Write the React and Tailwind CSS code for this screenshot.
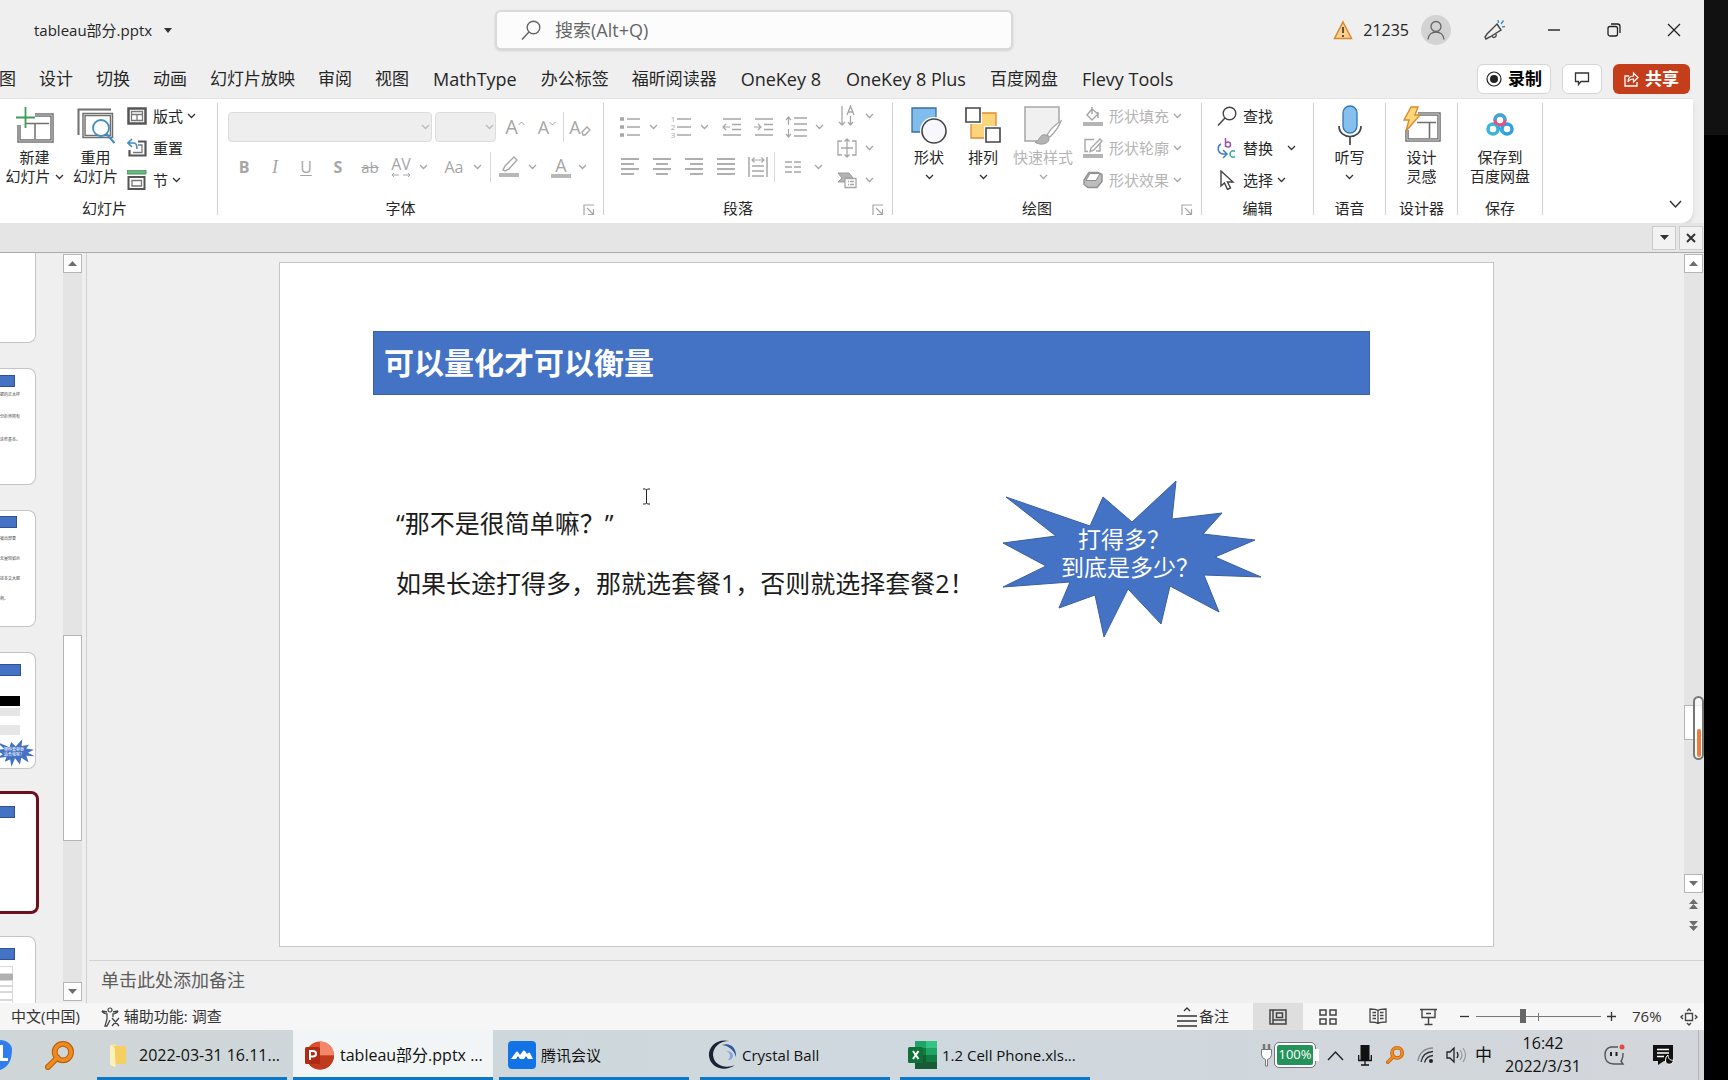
import React, { useState } from 'react';

const GRAY = '#a6a6a6';
const DARK = '#444444';

const Svg = ({ w, h, children, className = '' }) => (
  <svg width={w} height={h} viewBox={`0 0 ${w} ${h}`} fill="none" className={`shrink-0 ${className}`} aria-hidden="true">
    {children}
  </svg>
);

const Chevron = ({ color = '#333333' }) => (
  <Svg w={9} h={6}>
    <path d="M1 1l3.5 3.5L8 1" stroke={color} strokeWidth="1.3" />
  </Svg>
);

const DropChevron = () => (
  <span className="flex w-3.5 justify-center"><Chevron color={GRAY} /></span>
);

const Launcher = () => (
  <button aria-label="更多选项" className="mt-1 w-5">
    <Svg w={12} h={12}>
      <path d="M1 11V1h10M4 4l6 6M10.500 5v5.500H5" stroke={GRAY} strokeWidth="1.200" />
    </Svg>
  </button>
);

const Divider = () => <div className="mt-[3px] h-28 w-px shrink-0 bg-[#d0d0d0]" />;

const Group = ({ label, width, launcher, children }) => (
  <section className={`flex shrink-0 flex-col ${width}`}>
    <div className="flex h-24">{children}</div>
    <div className="flex h-6 items-center text-[15px] leading-6">
      <span className="flex-1 text-center">{label}</span>
      {launcher && <Launcher />}
    </div>
  </section>
);

const BigButton = ({ icon, lines, width, disabled, chevron, inlineChevron }) => (
  <button className={`flex shrink-0 flex-col items-center pt-1 text-[15px] leading-[19px] ${width} ${disabled ? 'text-[#b4b4b4]' : ''}`}>
    <span className="mb-0.5 flex h-[42px] items-center">{icon}</span>
    {lines.map((line, i) => (
      <span key={line} className="flex items-center gap-1 whitespace-nowrap">
        {line}
        {inlineChevron && i === lines.length - 1 && <Chevron />}
      </span>
    ))}
    {chevron && <span className="flex h-[19px] items-center"><Chevron color={disabled ? GRAY : '#333333'} /></span>}
  </button>
);

const SmallButton = ({ icon, label, chevron, disabled, labelClass = '' }) => (
  <button className={`flex h-8 items-center gap-1 text-[15px] ${disabled ? 'text-[#b4b4b4]' : ''}`}>
    <span className="mr-0.5 flex w-5 justify-center">{icon}</span>
    <span className={labelClass}>{label}</span>
    {chevron && <Chevron color={disabled ? GRAY : '#333333'} />}
  </button>
);

const Tool = ({ label, width = 'w-8', children }) => (
  <button aria-label={label} className={`flex h-[30px] shrink-0 items-center justify-center text-[#a6a6a6] ${width}`}>
    {children}
  </button>
);

const Lines = ({ rows }) => (
  <Svg w={20} h={20}>
    {rows.map(([x, w], i) => (
      <path key={i} d={`M${x} ${2 + i * 5}h${w}`} stroke={GRAY} strokeWidth="1.800" />
    ))}
  </Svg>
);

/* ---------- ribbon icons ---------- */

const NewSlideIcon = () => (
  <Svg w={38} h={38}>
    <path d="M19 9h17v26H3V19" stroke="#6f6f6f" strokeWidth="3.500" />
    <path d="M19 9h17v26H3V19" stroke="#c9c9c9" strokeWidth="1" />
    <path d="M10 17.500h23M19 18v15" stroke="#6f6f6f" strokeWidth="1.500" />
    <path d="M9.500 1v21M0 11.500h19" stroke="#3f9c57" strokeWidth="1.800" />
  </Svg>
);

const ReuseIcon = () => (
  <Svg w={38} h={38}>
    <path d="M1.500 29V3.500H34" stroke="#6f6f6f" strokeWidth="2" />
    <path d="M7 8.500h27.500v22H7z" stroke="#6f6f6f" strokeWidth="3.500" />
    <path d="M7 8.500h27.500v22H7z" stroke="#c9c9c9" />
    <circle cx="24" cy="22" r="8" fill="#fff" stroke="#3e8ec4" strokeWidth="1.800" />
    <path d="M29.500 28l8 9" stroke="#3e8ec4" strokeWidth="2" />
  </Svg>
);

const LayoutIcon = () => (
  <Svg w={20} h={18}>
    <path d="M1.500 1.500h17v15h-17z" stroke="#555" strokeWidth="2.500" />
    <path d="M4.500 4.500h11v9h-11zM4.500 7.500h11M10 7.500v6" stroke="#777" strokeWidth="1.300" />
  </Svg>
);

const ResetIcon = () => (
  <Svg w={20} h={20}>
    <path d="M11 3.500h7.500v14h-16V12" stroke="#555" strokeWidth="2.200" />
    <path d="M11 7h4v7.500H6" stroke="#777" strokeWidth="1.300" />
    <path d="M5 1L1 5l4 4M1.500 5H7c2 0 3 2 3 6" stroke="#3e8ec4" strokeWidth="1.600" />
  </Svg>
);

const SectionIcon = () => (
  <Svg w={20} h={20}>
    <path d="M0 0h19v4H0z" fill="#6fb482" stroke="#3f9c57" />
    <path d="M1.500 7h16v12h-16z" stroke="#555" strokeWidth="2" />
    <path d="M5 10.500h9.500V16H5z" stroke="#777" strokeWidth="1.300" />
  </Svg>
);

const ShapesIcon = () => (
  <Svg w={38} h={38}>
    <path d="M2 2h24v24H2z" fill="#80bcec" stroke="#3c6f9c" strokeWidth="1.300" />
    <circle cx="24" cy="25" r="14" fill="#fff" />
    <circle cx="24" cy="25" r="12" fill="#f8f8fc" stroke="#444" strokeWidth="1.600" />
  </Svg>
);

const ArrangeIcon = () => (
  <Svg w={38} h={38}>
    <path d="M7 7h25v25H7z" fill="#fbd47c" stroke="#e08a2c" strokeWidth="1.300" />
    <path d="M0 0h18v18H0zM20 20h18v18H20z" fill="#fff" />
    <path d="M2 2h14v14H2zM22 22h14v14H22z" fill="#fff" stroke="#444" strokeWidth="1.600" />
  </Svg>
);

const QuickStyleIcon = () => (
  <Svg w={40} h={40}>
    <path d="M2 2h34v34H2z" fill="#f0f0f0" stroke={GRAY} strokeWidth="1.500" />
    <path d="M39 14L24 30l-5 4 8 6h12z" fill="#fff" />
    <path d="M38 16c-5 3-11 9-14 14l3 2c5-5 9-10 11-16z" fill="#fff" stroke={GRAY} strokeWidth="1.300" />
    <path d="M12 37c4 0 4-6 8-7 3-1 6 1 6 4 0 5-9 7-14 3z" fill="#b4b4b4" stroke="#999" />
  </Svg>
);

const FillIcon = () => (
  <Svg w={20} h={20}>
    <path d="M9 3L4 9l5 5 6-6zM9 8V1M15 6v6" stroke={GRAY} strokeWidth="1.400" />
    <path d="M0 16h20v4H0z" fill="#b4b4b4" />
  </Svg>
);

const OutlineIcon = () => (
  <Svg w={20} h={20}>
    <path d="M11 1.500H2v12h3M17 5v8h-4" stroke={GRAY} strokeWidth="1.400" />
    <path d="M17 1l2 2-8 9-4 1.500L8 10z" stroke={GRAY} strokeWidth="1.400" />
    <path d="M0 16h20v4H0z" fill="#b4b4b4" />
  </Svg>
);

const EffectIcon = () => (
  <Svg w={20} h={18}>
    <path d="M6 1.500h9l4 2v7l-5 6H5l-4-3V9z" fill="#bdbdbd" stroke="#8f8f8f" strokeWidth="1.400" />
    <path d="M7 2.500h10l-4 7H3z" fill="#fff" stroke="#8f8f8f" />
  </Svg>
);

const SearchGlyph = ({ size = 20, color = DARK }) => (
  <svg width={size} height={size} viewBox="0 0 20 20" fill="none" className="shrink-0" aria-hidden="true">
    <circle cx="12.500" cy="7.500" r="6.300" stroke={color} strokeWidth="1.400" />
    <path d="M8 12l-7 7.500" stroke={color} strokeWidth="1.500" />
  </svg>
);

const ReplaceIcon = () => (
  <Svg w={20} h={22}>
    <path d="M8.500 1v9M8.500 6.500c1-2.500 5-2 5 1s-4 3.500-5 1" stroke="#9d4fb5" strokeWidth="1.500" />
    <path d="M18 14.500c-2-1.500-5-.5-5 2.500s3 4 5 2.500" stroke="#2e9fae" strokeWidth="1.500" />
    <path d="M4 7c-4 2-4 9 2 10h3M6 13l4 4-4 4" stroke="#3e7fc4" strokeWidth="1.500" />
  </Svg>
);

const SelectIcon = () => (
  <Svg w={18} h={20}>
    <path d="M3 1l12 11H9.500l3 6-3 1.500-3-6.500L3 16z" fill="#fff" stroke={DARK} strokeWidth="1.400" />
  </Svg>
);

const DictateIcon = () => (
  <Svg w={24} h={40}>
    <rect x="5" y="1" width="14" height="27" rx="7" fill="#86c0ee" stroke="#2f78b4" strokeWidth="1.300" />
    <path d="M1 21c0 14 22 14 22 0M12 32v8" stroke={DARK} strokeWidth="1.700" />
  </Svg>
);

const DesignerIcon = () => (
  <Svg w={38} h={38}>
    <path d="M15 8h21v26H4V24" stroke="#6f6f6f" strokeWidth="3.500" />
    <path d="M15 8h21v26H4V24" stroke="#d8d8d8" />
    <path d="M14 16.500h19M26.500 17v15" stroke="#6f6f6f" strokeWidth="1.600" />
    <path d="M8 1h7l-3 8h5L3 25l3-11H1z" fill="#fcd67a" stroke="#d98a2b" strokeWidth="1.400" />
  </Svg>
);

const NetdiskIcon = () => (
  <Svg w={28} h={24}>
    <circle cx="7" cy="16" r="5" stroke="#38b5dc" strokeWidth="3.500" />
    <circle cx="21" cy="16" r="5" stroke="#2f9fe0" strokeWidth="3.500" />
    <circle cx="14" cy="7" r="5" stroke="#e0557c" strokeWidth="3.500" />
    <path d="M9 7a5 5 0 0 1 10 0" stroke="#38a9dc" strokeWidth="3.500" />
    <path d="M10.500 12.500L18 20" stroke="#35aade" strokeWidth="3" />
  </Svg>
);

/* ---------- title bar and tabs ---------- */

const TitleBar = () => (
  <header className="flex h-[60px] items-center">
    <button className="ml-[34px] flex w-[461px] items-center gap-3 text-[15px] text-[#262626]">
      tableau部分.pptx
      <Svg w={8} h={5}><path d="M0 0h8L4 5z" fill="#333" /></Svg>
    </button>
    <label className="flex h-10 w-[518px] items-center gap-3.5 rounded-md border-2 border-[#d9d9d9] bg-[#fcfcfc] pl-6 shadow-sm">
      <SearchGlyph color="#666666" />
      <input
        type="search"
        aria-label="搜索"
        placeholder="搜索(Alt+Q)"
        className="flex-1 bg-transparent text-[18px] outline-none placeholder:text-[#666666]"
      />
    </label>
    <div className="ml-auto flex items-center">
      <Svg w={20} h={20}>
        <path d="M10 2l8.500 16.500h-17z" fill="#fbd08a" stroke="#d8892f" strokeWidth="1.500" />
        <path d="M10 7v6M10 15v2" stroke="#333" strokeWidth="1.600" />
      </Svg>
      <span className="ml-2.5 text-base text-[#262626]">21235</span>
      <button aria-label="账户" className="ml-3 flex h-[30px] w-[30px] items-center justify-center rounded-full bg-[#d3d3d3]">
        <Svg w={20} h={20}>
          <circle cx="10" cy="6.500" r="5" stroke="#666" strokeWidth="1.300" />
          <path d="M2 19.500c0-10 16-10 16 0" stroke="#666" strokeWidth="1.300" />
        </Svg>
      </button>
      <button aria-label="新增功能" className="ml-[33px]">
        <Svg w={22} h={22}>
          <path d="M13 5l4 6L6 18l-4 2-1-2 2-3z" stroke={DARK} strokeWidth="1.400" />
          <path d="M8 17c1 3 5 1 4-2" stroke={DARK} strokeWidth="1.300" />
          <path d="M14.500 4L14 1M17 5l2.500-3.500M18 8l3-.5" stroke="#3e8ec4" strokeWidth="1.400" />
        </Svg>
      </button>
      <button aria-label="最小化" className="ml-[42px]">
        <Svg w={12} h={12}><path d="M0 6h12" stroke="#222" strokeWidth="1.400" /></Svg>
      </button>
      <button aria-label="还原" className="ml-[47px]">
        <Svg w={14} h={14}>
          <rect x="1" y="3.500" width="9.500" height="9.500" rx="2" stroke="#222" strokeWidth="1.300" />
          <path d="M4 1h6.500Q13 1 13 3.500V10" stroke="#222" strokeWidth="1.300" />
        </Svg>
      </button>
      <button aria-label="关闭" className="ml-[46px] mr-[23px]">
        <Svg w={14} h={14}><path d="M1 1l12 12M13 1L1 13" stroke="#222" strokeWidth="1.300" /></Svg>
      </button>
    </div>
  </header>
);

const tabs = ['绘图', '设计', '切换', '动画', '幻灯片放映', '审阅', '视图', 'MathType', '办公标签', '福昕阅读器', 'OneKey 8', 'OneKey 8 Plus', '百度网盘', 'Flevy Tools'];

const isLatin = (text) => /^[A-Z]/.test(text);

const TabRow = () => (
  <nav className="flex h-[38px] items-center overflow-hidden">
    <div className="-ml-[18px] flex gap-[23px] text-[17px] text-[#262626]">
      {tabs.map((tab) => (
        <button key={tab} className={isLatin(tab) ? 'whitespace-nowrap px-px text-[18px]' : 'whitespace-nowrap'}>{tab}</button>
      ))}
    </div>
    <div className="ml-auto mr-3.5 flex items-center gap-[11px] text-[17px] font-bold">
      <button className="flex h-[30px] items-center gap-1.5 rounded-md border border-[#d6d6d6] bg-white px-2">
        <Svg w={16} h={16}>
          <circle cx="8" cy="8" r="7" stroke="#222" strokeWidth="1.200" />
          <circle cx="8" cy="8" r="4" fill="#222" />
        </Svg>
        录制
      </button>
      <button aria-label="批注" className="flex h-[30px] w-10 items-center justify-center rounded-md border border-[#d6d6d6] bg-white">
        <Svg w={16} h={14}><path d="M1.500 1h13v8.500H7L4.500 12.500v-3h-3z" stroke="#333" strokeWidth="1.300" /></Svg>
      </button>
      <button className="flex h-[30px] items-center gap-1.5 rounded-md bg-[#c43e1c] px-[11px] text-white">
        <Svg w={15} h={16}>
          <path d="M5 5H1v10h12v-4" stroke="#fff" strokeWidth="1.300" />
          <path d="M4 11c0-4 2-6 5.500-6V2L14 6.500 9.500 11V8C7 8 5 9 4 11z" stroke="#fff" strokeWidth="1.200" />
        </Svg>
        共享
      </button>
    </div>
  </nav>
);

/* ---------- ribbon ---------- */

const Combo = ({ label, width }) => (
  <span className={`relative flex h-[30px] ${width}`}>
    <select aria-label={label} disabled className="w-full appearance-none rounded border border-[#dcdcdc] bg-[#eeeeee]" />
    <span className="pointer-events-none absolute right-0.5 top-3"><Chevron color="#bbbbbb" /></span>
  </span>
);

const Bar = () => <span className="h-[30px] w-px shrink-0 bg-[#d8d8d8]" />;

const FontGroup = () => (
  <Group label="字体" width="w-[385px]" launcher>
    <div className="flex flex-col gap-2.5 pl-2.5 pt-3">
      <div className="flex items-center">
        <Combo label="字体" width="w-[204px] mr-[3px]" />
        <Combo label="字号" width="w-[61px] mr-[3px]" />
        <Tool label="增大字号">
          <span className="text-xl">A</span>
          <Svg w={7} h={12}><path d="M.5 4L3.500 1l3 3" stroke={GRAY} /></Svg>
        </Tool>
        <Tool label="减小字号">
          <span className="text-lg">A</span>
          <Svg w={7} h={12}><path d="M.5 1l3 3 3-3" stroke={GRAY} /></Svg>
        </Tool>
        <Bar />
        <Tool label="清除格式" width="w-8">
          <span className="text-lg">A</span>
          <Svg w={10} h={10} className="mt-2"><path d="M1 6l5-5 3 3-5 5H2z" stroke={GRAY} strokeWidth="1.300" /></Svg>
        </Tool>
      </div>
      <div className="flex items-center">
        <Tool label="加粗"><span className="text-base font-bold">B</span></Tool>
        <Tool label="倾斜" width="w-[30px]"><span className="font-['Liberation_Serif'] text-lg italic">I</span></Tool>
        <Tool label="下划线"><span className="text-base underline underline-offset-2">U</span></Tool>
        <Tool label="阴影"><span className="text-base font-bold">S</span></Tool>
        <Tool label="删除线"><span className="text-[15px] line-through">ab</span></Tool>
        <Tool label="字符间距" width="w-[30px]">
          <span className="flex flex-col items-center leading-4">
            <span className="text-base leading-4">AV</span>
            <Svg w={20} h={6}><path d="M3 1L1 3l2 2M1 3h7M17 1l2 2-2 2M19 3h-7" stroke={GRAY} /></Svg>
          </span>
        </Tool>
        <DropChevron />
        <Tool label="更改大小写" width="w-8 ml-2"><span className="text-base">Aa</span></Tool>
        <DropChevron />
        <span className="ml-1.5 mr-1 flex"><Bar /></span>
        <Tool label="突出显示" width="w-7">
          <Svg w={20} h={22}>
            <path d="M15 1l3 3-8 9-4 2-2-1 2-4z" stroke={GRAY} strokeWidth="1.400" />
            <path d="M0 17h20v4H0z" fill="#b8b8b8" />
          </Svg>
        </Tool>
        <span className="ml-0.5 flex"><DropChevron /></span>
        <Tool label="字体颜色" width="ml-2 w-7">
          <span className="flex flex-col items-center">
            <span className="text-lg leading-[18px]">A</span>
            <span className="h-1 w-5 bg-[#b8b8b8]" />
          </span>
        </Tool>
        <DropChevron />
      </div>
    </div>
  </Group>
);

const BulletIcon = () => (
  <Svg w={20} h={22}>
    <path d="M0 3h4M0 11h4M0 19h4" stroke={GRAY} strokeWidth="3.500" />
    <path d="M7 3h13M7 11h13M7 19h13" stroke={GRAY} strokeWidth="1.600" />
  </Svg>
);

const NumberIcon = () => (
  <span className="flex items-center gap-0.5">
    <span className="flex flex-col text-[8px] leading-[8px]"><span>1</span><span>2</span><span>3</span></span>
    <Svg w={14} h={22}><path d="M0 3h14M0 11h14M0 19h14" stroke={GRAY} strokeWidth="1.600" /></Svg>
  </span>
);

const IndentIcon = ({ arrow }) => (
  <Svg w={20} h={20}>
    <path d="M1 2h18M10 7.500h9M10 12.500h9M1 18h18" stroke={GRAY} strokeWidth="1.600" />
    <path d={arrow} stroke={GRAY} strokeWidth="1.200" />
  </Svg>
);

const ParagraphGroup = () => (
  <Group label="段落" width="w-[288px]" launcher>
    <div className="flex flex-col gap-2.5 pl-2.5 pt-3">
      <div className="flex items-center">
        <Tool label="项目符号"><BulletIcon /></Tool>
        <DropChevron />
        <Tool label="编号" width="ml-[5px] w-8"><NumberIcon /></Tool>
        <DropChevron />
        <Tool label="减少缩进" width="ml-[5px] w-8"><IndentIcon arrow="M8 10H1M4 7l-3 3 3 3" /></Tool>
        <Tool label="增加缩进"><IndentIcon arrow="M0 10h7M4 7l3 3-3 3" /></Tool>
        <Tool label="行距">
          <Svg w={22} h={22}>
            <path d="M9 2h13M9 8h13M9 14h13M9 20h13" stroke={GRAY} strokeWidth="1.600" />
            <path d="M3.500 9V1M1 4l2.500-3L6 4M3.500 13v8M1 18l2.500 3L6 18" stroke={GRAY} strokeWidth="1.200" />
          </Svg>
        </Tool>
        <DropChevron />
      </div>
      <div className="flex items-center">
        <Tool label="左对齐"><Lines rows={[[1, 18], [1, 13], [1, 18], [1, 13]]} /></Tool>
        <Tool label="居中"><Lines rows={[[1, 18], [4, 12], [1, 18], [4, 12]]} /></Tool>
        <Tool label="右对齐"><Lines rows={[[1, 18], [6, 13], [1, 18], [6, 13]]} /></Tool>
        <Tool label="两端对齐"><Lines rows={[[1, 18], [1, 18], [1, 18], [1, 18]]} /></Tool>
        <Tool label="分散对齐">
          <Svg w={20} h={22}>
            <path d="M1 1v20M19 1v20M4 10h12M4 15h12M4 20h12" stroke={GRAY} strokeWidth="1.500" />
            <path d="M4 4h12M6.500 1.500L4 4l2.500 2.500M13.500 1.500L16 4l-2.500 2.500" stroke={GRAY} strokeWidth="1.200" />
          </Svg>
        </Tool>
        <Bar />
        <Tool label="分栏" width="w-9">
          <Svg w={16} h={12}><path d="M0 1h7M0 6h7M0 11h7M9 1h7M9 6h7M9 11h7" stroke={GRAY} strokeWidth="1.500" /></Svg>
        </Tool>
        <DropChevron />
      </div>
    </div>
    <div className="ml-auto mr-[18px] flex flex-col">
      <button aria-label="文字方向" className="flex h-8 items-center gap-2">
        <Svg w={20} h={22}>
          <path d="M5 1v19M2 17l3 3 3-3M10 10l3.500-9L17 10M11 7h5M13.500 11v9M11 17l2.500 3 2.500-3" stroke={GRAY} strokeWidth="1.300" />
        </Svg>
        <Chevron color={GRAY} />
      </button>
      <button aria-label="对齐文本" className="flex h-8 items-center gap-2">
        <Svg w={20} h={20}>
          <path d="M5 3H1v14h4M15 3h4v14h-4M4 10h12M10 1v18M7.500 3.500L10 1l2.500 2.500M7.500 16.500L10 19l2.500-2.500" stroke={GRAY} strokeWidth="1.300" />
        </Svg>
        <Chevron color={GRAY} />
      </button>
      <button aria-label="转换为 SmartArt" className="flex h-8 items-center gap-2">
        <Svg w={20} h={18}>
          <path d="M1 2h11l4 5H8v4H1l4-4z" fill="#b4b4b4" stroke="#999" />
          <path d="M8 7.500h11v9H8zM11 10.500h1M13 10.500h4M11 13.500h1M13 13.500h4" fill="#fff" stroke={GRAY} strokeWidth="1.300" />
        </Svg>
        <Chevron color={GRAY} />
      </button>
    </div>
  </Group>
);

const Ribbon = () => (
  <div className="mr-[11px] flex rounded-br-xl border-t border-[#e2e2e2] bg-white pb-[3px] pt-px text-[#262626] shadow-md">
    <Group label="幻灯片" width="w-[217px] pr-2">
      <BigButton icon={<NewSlideIcon />} lines={['新建', '幻灯片']} width="w-[69px]" inlineChevron />
      <BigButton icon={<ReuseIcon />} lines={['重用', '幻灯片']} width="w-[53px]" />
      <div className="ml-[5px] flex flex-col">
        <SmallButton icon={<LayoutIcon />} label="版式" chevron />
        <SmallButton icon={<ResetIcon />} label="重置" />
        <SmallButton icon={<SectionIcon />} label="节" chevron />
      </div>
    </Group>
    <Divider />
    <FontGroup />
    <Divider />
    <ParagraphGroup />
    <Divider />
    <Group label="绘图" width="w-[308px]" launcher>
      <BigButton icon={<ShapesIcon />} lines={['形状']} width="ml-[9px] w-[54px]" chevron />
      <BigButton icon={<ArrangeIcon />} lines={['排列']} width="w-[54px]" chevron />
      <BigButton icon={<QuickStyleIcon />} lines={['快速样式']} width="w-[66px]" disabled chevron />
      <div className="ml-[7px] flex flex-col">
        <SmallButton icon={<FillIcon />} label="形状填充" disabled chevron />
        <SmallButton icon={<OutlineIcon />} label="形状轮廓" disabled chevron />
        <SmallButton icon={<EffectIcon />} label="形状效果" disabled chevron />
      </div>
    </Group>
    <Divider />
    <Group label="编辑" width="w-[111px]">
      <div className="ml-[15px] flex flex-col">
        <SmallButton icon={<SearchGlyph />} label="查找" />
        <SmallButton icon={<ReplaceIcon />} label="替换" labelClass="mr-2.5" chevron />
        <SmallButton icon={<SelectIcon />} label="选择" chevron />
      </div>
    </Group>
    <Divider />
    <Group label="语音" width="w-[71px]">
      <BigButton icon={<DictateIcon />} lines={['听写']} width="w-full" chevron />
    </Group>
    <Divider />
    <Group label="设计器" width="w-[71px]">
      <BigButton icon={<DesignerIcon />} lines={['设计', '灵感']} width="w-full" />
    </Group>
    <Divider />
    <Group label="保存" width="w-[84px]">
      <BigButton icon={<NetdiskIcon />} lines={['保存到', '百度网盘']} width="w-full" />
    </Group>
    <Divider />
    <button aria-label="折叠功能区" className="mb-[11px] ml-auto mr-[11px] self-end">
      <Svg w={13} h={9}><path d="M1 1l5.500 6L12 1" stroke="#333" strokeWidth="1.500" /></Svg>
    </button>
  </div>
);

/* ---------- thumbnails ---------- */

const Thumb = ({ selected, height = 'h-[117px]', children }) => (
  <button
    aria-label="幻灯片缩略图"
    className={
      selected
        ? '-my-[3px] block h-[123px] w-[39px] shrink-0 overflow-hidden rounded-r-lg border-[3px] border-l-0 border-[#6d0f1c] bg-white text-left'
        : `block w-9 shrink-0 overflow-hidden rounded-r-lg border border-l-0 border-[#c4c4c4] bg-white text-left ${height}`
    }
  >
    <span className="flex h-full flex-col items-start">{children}</span>
  </button>
);

const ThumbBar = ({ className }) => <span className={`shrink-0 border border-l-0 border-[#2f528f] bg-[#4472c4] ${className}`} />;

const TinyText = ({ children, className }) => (
  <span className={`shrink-0 whitespace-nowrap text-[4px] leading-[6px] text-[#444] ${className}`}>{children}</span>
);

const ScrollButton = ({ up, label }) => (
  <button aria-label={label} className="flex h-[19px] w-[19px] shrink-0 items-center justify-center border border-[#b5b5b5] bg-white">
    <Svg w={9} h={5}><path d={up ? 'M0 5h9L4.500 0z' : 'M0 0h9L4.500 5z'} fill="#6e6e6e" /></Svg>
  </button>
);

const BURST = '4,17 88,46 101,17 130,42 174,1 170,39 220,33 201,54 253,60 213,77 259,97 202,95 217,132 168,106 159,144 126,109 102,157 93,115 57,128 68,102 1,107 44,86 1,63 54,56';

const ThumbPanel = () => (
  <aside className="flex w-[87px] shrink-0 justify-between border-r border-[#cfcfcf]">
    <div className="flex min-h-0 flex-col gap-[25px] overflow-hidden">
      <Thumb height="h-[90px] rounded-tr-none border-t-0" />
      <Thumb>
        <ThumbBar className="mt-1.5 h-3 w-[15px]" />
        <TinyText className="mt-[5px]">据的正太样</TinyText>
        <TinyText className="mt-4">分析师所有</TinyText>
        <TinyText className="mt-[17px]">这些基本。</TinyText>
      </Thumb>
      <Thumb>
        <ThumbBar className="mt-[5px] h-3 w-[17px]" />
        <TinyText className="mt-2">被出部果</TinyText>
        <TinyText className="mt-3.5">无量较如示</TinyText>
        <TinyText className="mt-3.5">技本文大服</TinyText>
        <TinyText className="mt-3.5">商。</TinyText>
      </Thumb>
      <Thumb>
        <ThumbBar className="mt-[11px] h-3 w-[21px]" />
        <span className="mt-5 h-2.5 w-5 shrink-0 bg-black" />
        <span className="mt-0.5 h-2 w-5 shrink-0 bg-[#e6e6e6]" />
        <span className="mt-[9px] h-2.5 w-5 shrink-0 bg-[#e6e6e6]" />
        <span className="relative mt-1 h-7 w-[35px] shrink-0">
          <svg viewBox="25 0 235 158" preserveAspectRatio="none" className="h-full w-full" aria-hidden="true">
            <polygon points={BURST} fill="#4472c4" />
          </svg>
          <span className="absolute left-1 top-2 whitespace-nowrap text-[4px] leading-[5px] text-white">哪种套餐更<br />适合我呢？</span>
        </span>
      </Thumb>
      <Thumb selected>
        <ThumbBar className="mt-3 h-3 w-[15px]" />
      </Thumb>
      <Thumb>
        <ThumbBar className="mt-[11px] h-3 w-[15px]" />
        <span className="mt-1.5 h-2 w-[13px] shrink-0 border border-l-0 border-[#d8d8d8]" />
        <span className="h-1.5 w-[13px] shrink-0 bg-[#b0b0b0]" />
        <span className="h-1.5 w-[13px] shrink-0 border border-l-0 border-[#d8d8d8]" />
        <span className="h-1.5 w-[13px] shrink-0 border border-l-0 border-[#d8d8d8]" />
        <span className="h-2 w-[13px] shrink-0 border border-l-0 border-[#d8d8d8]" />
        <span className="h-4 w-[13px] shrink-0 border border-l-0 border-[#d8d8d8]" />
      </Thumb>
    </div>
    <div className="mb-0.5 mr-1 mt-px flex flex-col bg-[#e4e4e4]">
      <ScrollButton up label="向上滚动" />
      <div className="flex-[363]" />
      <div className="flex-[205] border border-[#b5b5b5] bg-white" />
      <div className="flex-[141]" />
      <ScrollButton label="向下滚动" />
    </div>
  </aside>
);

/* ---------- slide ---------- */

const Slide = () => (
  <article className="relative h-full border border-[#c6c6c6] bg-white">
    <h1 className="ml-[93px] mr-[123px] mt-[68px] h-16 border border-[#3a62a8] bg-[#4472c4] pl-2.5 text-[30px] font-bold leading-[62px] text-white">
      可以量化才可以衡量
    </h1>
    <div className="mt-[85px] flex">
      <div className="ml-[116px] w-[606px] shrink-0 pt-[13px] text-[25px] leading-[60px] text-[#1c1c1c]">
        <p>“那不是很简单嘛？”</p>
        <p>如果长途打得多，那就选套餐1，否则就选择套餐2！</p>
      </div>
      <div className="relative h-[158px] w-[260px] shrink-0">
        <Svg w={260} h={158}>
          <polygon points={BURST} fill="#4472c4" stroke="#3a5f9f" strokeWidth="1" />
        </Svg>
        <div className="absolute inset-x-0 top-[45px] text-center text-[23px] leading-7 text-white">
          <p className="pr-4">打得多？</p>
          <p className="pr-1">到底是多少？</p>
        </div>
      </div>
    </div>
    <span className="absolute left-[362px] top-[225px]">
      <Svg w={9} h={17}><path d="M1 1h2.500l1 1 1-1H8M4.500 2v13M1 16h2.500l1-1 1 1H8" stroke="#222" /></Svg>
    </span>
  </article>
);

const Editor = () => (
  <main className="flex min-w-0 flex-1 flex-col">
    <div className="flex min-h-0 flex-1">
      <div className="min-w-0 flex-1 pb-[13px] pl-48 pr-[190px] pt-[9px]">
        <Slide />
      </div>
      <div className="relative mt-px flex w-5 shrink-0 flex-col items-start pb-[29px]">
        <div className="flex min-h-0 w-full flex-1 flex-col bg-[#e4e4e4]">
          <ScrollButton up label="向上滚动" />
          <div className="flex-[433]" />
          <div className="flex-[33] border border-[#b5b5b5] bg-white" />
          <div className="flex-[134]" />
          <ScrollButton label="向下滚动" />
        </div>
        <button aria-label="上一张幻灯片" className="ml-[5px] mt-1.5 flex">
          <Svg w={9} h={10}><path d="M0 5h9L4.500 0zM0 10h9L4.500 5z" fill="#6e6e6e" /></Svg>
        </button>
        <button aria-label="下一张幻灯片" className="ml-[5px] mt-3 flex">
          <Svg w={9} h={10}><path d="M0 0h9L4.500 5zM0 5h9L4.500 10z" fill="#6e6e6e" /></Svg>
        </button>
        <div className="absolute right-0 top-[442px] flex h-16 w-[11px] items-end justify-center rounded-full border-2 border-[#777] bg-white/70 p-px">
          <div className="h-7 w-1 rounded-full bg-[#ed7d3c]" />
        </div>
      </div>
    </div>
    <div className="ml-0.5 h-[43px] border-t border-[#d2d2d2] pl-3 text-[18px] leading-[38px]">
      <input aria-label="备注" placeholder="单击此处添加备注" className="w-full bg-transparent outline-none placeholder:text-[#5c5c5c]" />
    </div>
  </main>
);

const StatusBar = () => {
  const [zoom, setZoom] = useState(76);
  return (
    <div className="flex h-[27px] items-center bg-[#f6f6f6] text-[15px] text-[#333]">
      <button className="ml-[11px]">中文(中国)</button>
      <button className="ml-[21px] flex items-center gap-1">
        <Svg w={19} h={20}>
          <circle cx="9" cy="3" r="2" stroke={DARK} strokeWidth="1.200" />
          <path d="M1 4c0 2 4 3 5 3v5l-2 7h2l3-6M17 4c0 2-4 3-5 3v3M1 4l5 1M17 4l-5 1M11 11l7 8M18 11l-7 8" stroke={DARK} strokeWidth="1.300" />
        </Svg>
        辅助功能: 调查
      </button>
      <button className="ml-auto flex items-center gap-0.5">
        <Svg w={20} h={22}><path d="M7 5l3-3 3 3M0 10h20M0 15h20M0 20h20" stroke="#333" strokeWidth="1.300" /></Svg>
        备注
      </button>
      <button aria-label="普通视图" className="ml-6 flex h-full w-[50px] items-center justify-center bg-[#dedede]">
        <Svg w={18} h={16}><path d="M1 1h16v14H1zM4 1v14M4 11h13M7.500 4h6v4.500h-6z" stroke={DARK} strokeWidth="1.500" /></Svg>
      </button>
      <button aria-label="幻灯片浏览" className="flex w-[50px] justify-center">
        <Svg w={18} h={16}><path d="M1 1h6v5H1zM11 1h6v5h-6zM1 10h6v5H1zM11 10h6v5h-6z" stroke={DARK} strokeWidth="1.500" /></Svg>
      </button>
      <button aria-label="阅读视图" className="flex w-[50px] justify-center">
        <Svg w={18} h={17}><path d="M9 2.500C7 1 4 1 1 1v13c3 0 6 0 8 1.500M9 2.500C11 1 14 1 17 1v13c-3 0-6 0-8 1.500M9 2v14M3.500 4.500H7M3.500 7.500H7M3.500 10.500H7M11 4.500h3.500M11 7.500h3.500M11 10.500h3.500" stroke={DARK} strokeWidth="1.300" /></Svg>
      </button>
      <button aria-label="幻灯片放映" className="flex w-[50px] justify-center">
        <Svg w={17} h={18}><path d="M0 1.500h17M2 2v7.500h13V2M8.500 10v6M4.500 16.500h8M6 5.500h5" stroke={DARK} strokeWidth="1.400" /></Svg>
      </button>
      <button aria-label="缩小" className="ml-[7px]">
        <Svg w={9} h={9}><path d="M0 4.500h9" stroke="#333" strokeWidth="1.300" /></Svg>
      </button>
      <span className="relative ml-[7px] flex w-[125px] items-center">
        <input
          type="range"
          aria-label="缩放"
          min="10"
          max="190"
          value={zoom}
          onChange={(e) => setZoom(Number(e.target.value))}
          className="h-3.5 w-full appearance-none bg-transparent [&::-webkit-slider-runnable-track]:h-px [&::-webkit-slider-runnable-track]:bg-[#777] [&::-webkit-slider-thumb]:-mt-[7px] [&::-webkit-slider-thumb]:h-3.5 [&::-webkit-slider-thumb]:w-1.5 [&::-webkit-slider-thumb]:appearance-none [&::-webkit-slider-thumb]:bg-[#666]"
        />
        <span className="absolute left-[62px] h-2 w-px bg-[#777]" />
      </span>
      <button aria-label="放大" className="ml-1.5">
        <Svg w={9} h={9}><path d="M0 4.500h9M4.500 0v9" stroke="#333" strokeWidth="1.300" /></Svg>
      </button>
      <span className="ml-4 w-8">{zoom}%</span>
      <button aria-label="适应窗口" className="ml-4 mr-1.5">
        <Svg w={18} h={18}><path d="M5.500 5.500h7v7h-7zM7 3l2-2 2 2M7 15l2 2 2-2M3 7L1 9l2 2M15 7l2 2-2 2" stroke={DARK} strokeWidth="1.400" /></Svg>
      </button>
    </div>
  );
};

/* ---------- taskbar ---------- */

const FolderIcon = () => (
  <Svg w={18} h={25}>
    <path d="M1 2l6-1v23l-6-2z" fill="#fbe59a" />
    <path d="M5 3h12v18H7z" fill="#f6cf62" />
    <path d="M1 2l5 3v19l-5-2z" fill="#fdf0bd" />
  </Svg>
);

const PowerPointIcon = () => (
  <Svg w={29} h={29}>
    <circle cx="15" cy="14.500" r="14" fill="#d9502f" />
    <path d="M15 .5a14 14 0 0 1 14 14H15z" fill="#f3876a" />
    <path d="M1 14.500h28a14 14 0 0 1-28 0z" fill="#c23a1e" />
    <rect x="0" y="6" width="15" height="17" rx="1.500" fill="#b02b14" />
    <path d="M5 19v-9h3c4 0 4 5.500 0 5.500H5" stroke="#fff" strokeWidth="2" />
  </Svg>
);

const MeetingIcon = () => (
  <Svg w={28} h={28}>
    <rect width="28" height="28" rx="4" fill="#1273e6" />
    <path d="M3 18l5-7q1-1 2 0l2 3 3-4q1-1 2 0l2 3 1-1q1-1 2 0l3 6h-5l-2-3-2 3h-4l-2-3-2 3z" fill="#fff" />
  </Svg>
);

const CrystalIcon = () => (
  <Svg w={30} h={30}>
    <path d="M21 1C9-2 0 7 1 16c1 11 15 17 26 9-9 4-21 1-22-10C5 7 12 1 21 1z" fill="#1c2233" />
    <path d="M14 5c8-3 15 3 14 12-2-7-7-11-14-12z" fill="#2f5a9c" />
    <path d="M17 11c5 0 7 6 3 9 7 0 7-10-3-9z" fill="#7fa6d6" />
  </Svg>
);

const ExcelIcon = () => (
  <Svg w={29} h={28}>
    <path d="M7 0h11v7H7z" fill="#21a366" />
    <path d="M18 0h11v7H18z" fill="#33c481" />
    <path d="M7 7h11v7H7z" fill="#107c41" />
    <path d="M18 7h11v7H18z" fill="#21a366" />
    <path d="M7 14h22v14H7z" fill="#185c37" />
    <path d="M18 14h11v7H18z" fill="#107c41" />
    <rect x="0" y="6" width="15" height="16" rx="1.500" fill="#0f7039" />
    <path d="M5 10l5.500 8M10.500 10L5 18" stroke="#fff" strokeWidth="2" />
  </Svg>
);

const Magnifier = ({ size }) => (
  <svg width={size} height={size} viewBox="0 0 30 30" fill="none" className="shrink-0" aria-hidden="true">
    <circle cx="18.500" cy="11.500" r="8.500" stroke="#b8590f" strokeWidth="6" />
    <path d="M13 17L3 27" stroke="#b8590f" strokeWidth="6" strokeLinecap="round" />
    <circle cx="18.500" cy="11.500" r="8.500" stroke="#ef8a1d" strokeWidth="4" />
    <path d="M13 17L3 27" stroke="#ef8a1d" strokeWidth="4" strokeLinecap="round" />
  </svg>
);

const tasks = [
  { icon: <FolderIcon />, text: '2022-03-31 16.11...', cls: 'w-[190px] mr-1.5 pl-3 gap-3 text-base' },
  { icon: <PowerPointIcon />, text: 'tableau部分.pptx ...', cls: 'w-[200px] mr-1.5 pl-3 gap-1.5 bg-[#f1f5f6] text-base' },
  { icon: <MeetingIcon />, text: '腾讯会议', cls: 'w-[190px] mr-[11px] pl-[9px] gap-[5px] text-[15px]' },
  { icon: <CrystalIcon />, text: 'Crystal Ball', cls: 'w-[190px] mr-2.5 pl-2 gap-1 text-[15px]' },
  { icon: <ExcelIcon />, text: '1.2 Cell Phone.xls...', cls: 'w-[190px] pl-2 gap-[5px] text-[15px]' },
];

const Taskbar = () => (
  <footer className="flex h-[50px] items-stretch bg-gradient-to-r from-[#cfd6d7] via-[#ced8de] to-[#d3d6da] text-[#111]">
    <button aria-label="浏览器" className="flex w-3 items-center overflow-hidden">
      <Svg w={12} h={32}>
        <path d="M0 1c7 0 12 5 12 9 0 12-4 18-12 21z" fill="#2f7ef0" />
        <path d="M0 6v16h8v-3H3V6z" fill="#fff" />
      </Svg>
    </button>
    <button aria-label="搜索工具" className="ml-[33px] mr-[23px] flex items-center"><Magnifier size={29} /></button>
    {tasks.map((task) => (
      <button key={task.text} className={`flex items-center whitespace-nowrap border-b-[3px] border-[#0f78c4] pt-[3px] ${task.cls}`}>
        {task.icon}
        {task.text}
      </button>
    ))}
    <div className="ml-auto flex items-center">
      <Svg w={13} h={24}>
        <path d="M4 1v6M9 1v6" stroke="#777" strokeWidth="2.500" />
        <path d="M1.500 6.500h10v5q0 4-4 5V23h-2v-6.500q-4-1-4-5z" fill="#fff" stroke="#777" />
      </Svg>
      <span className="ml-0.5 flex h-6 w-10 items-center justify-center rounded-sm border-2 border-white bg-[#23935a] text-[13px] text-white outline outline-[#777]">100%</span>
      <span className="h-3 w-1 bg-white" />
      <button aria-label="显示隐藏的图标" className="ml-2">
        <Svg w={17} h={11}><path d="M1 10l7.500-8 7.500 8" stroke="#222" strokeWidth="1.400" /></Svg>
      </button>
      <Svg w={14} h={22} className="ml-3.5">
        <path d="M2.500 1h9v15h-9z" fill="#111" />
        <path d="M.7 11v5.500h12.600V11M7 17v4M3 21h8" stroke="#111" strokeWidth="1.300" />
      </Svg>
      <span className="ml-3.5"><Magnifier size={18} /></span>
      <Svg w={17} h={18} className="ml-[13px]">
        <path d="M1 15C2 7 8 2 16 2" stroke="#888" strokeWidth="1.300" />
        <path d="M4 16C5 10 9 6 16 5.500M7.500 16.500C8.500 12.500 11 10 16 9.500" stroke="#333" strokeWidth="1.300" />
        <circle cx="14" cy="15" r="2" fill="#222" />
      </Svg>
      <Svg w={21} h={18} className="ml-3">
        <path d="M1 6h3l4-4v14l-4-4H1z" stroke="#222" strokeWidth="1.300" />
        <path d="M11 6q2 3 0 6" stroke="#222" strokeWidth="1.300" />
        <path d="M14 4q4 5 0 10M17 2q5 7 0 14" stroke="#999" strokeWidth="1.200" />
      </Svg>
      <span className="ml-2 text-[17px]">中</span>
      <div className="ml-3 flex w-[78px] flex-col items-center text-base leading-[23px]">
        <span>16:42</span>
        <span>2022/3/31</span>
      </div>
      <Svg w={21} h={22} className="ml-[22px]">
        <path d="M14 3H7Q1 4 1 11q0 9 9 9h9l-2-3q2-2 2-8" stroke="#555" strokeWidth="1.400" />
        <path d="M7 8v4M12.500 8v4" stroke="#222" strokeWidth="2" />
        <circle cx="18" cy="3" r="2.500" fill="#e64a3c" />
      </Svg>
      <Svg w={21} h={22} className="ml-7">
        <path d="M0 1h20v16h-9l-6 4v-4H0z" fill="#111" />
        <path d="M4 5.500h12M4 9h12M4 12.500h7" stroke="#fff" strokeWidth="1.400" />
        <path d="M15 11c0 4 3 6 5.500 5-1 6-8 5-8 1 0-3 1-5 2.500-6z" fill="#111" stroke="#fff" />
      </Svg>
      <span className="ml-6 mr-[5px] h-[50px] w-px bg-[#b0b4b8]" />
    </div>
  </footer>
);

export default function App() {
  return (
    <div className="flex h-screen w-full overflow-hidden bg-black font-['Open_Sans','Noto_Sans_CJK_SC',sans-serif]">
      <div className="flex min-w-0 flex-1 flex-col bg-[#efefef]">
        <TitleBar />
        <TabRow />
        <Ribbon />
        <div className="flex h-[30px] shrink-0 items-center justify-end gap-[3px] border-b border-[#ababab] bg-[#e5e5e5] pr-px">
          <button aria-label="选项" className="flex h-6 w-6 items-center justify-center border border-[#cccccc] bg-[#f2f2f2]">
            <Svg w={9} h={5}><path d="M0 0h9L4.500 5z" fill="#333" /></Svg>
          </button>
          <button aria-label="关闭窗格" className="flex h-6 w-6 items-center justify-center border border-[#cccccc] bg-[#f2f2f2]">
            <Svg w={10} h={10}><path d="M1 1l8 8M9 1L1 9" stroke="#333" strokeWidth="2" /></Svg>
          </button>
        </div>
        <div className="flex min-h-0 flex-1">
          <ThumbPanel />
          <Editor />
        </div>
        <StatusBar />
        <Taskbar />
      </div>
      <div className="w-6 shrink-0 bg-black">
        <div className="h-[135px] bg-[#111111]" />
      </div>
    </div>
  );
}
